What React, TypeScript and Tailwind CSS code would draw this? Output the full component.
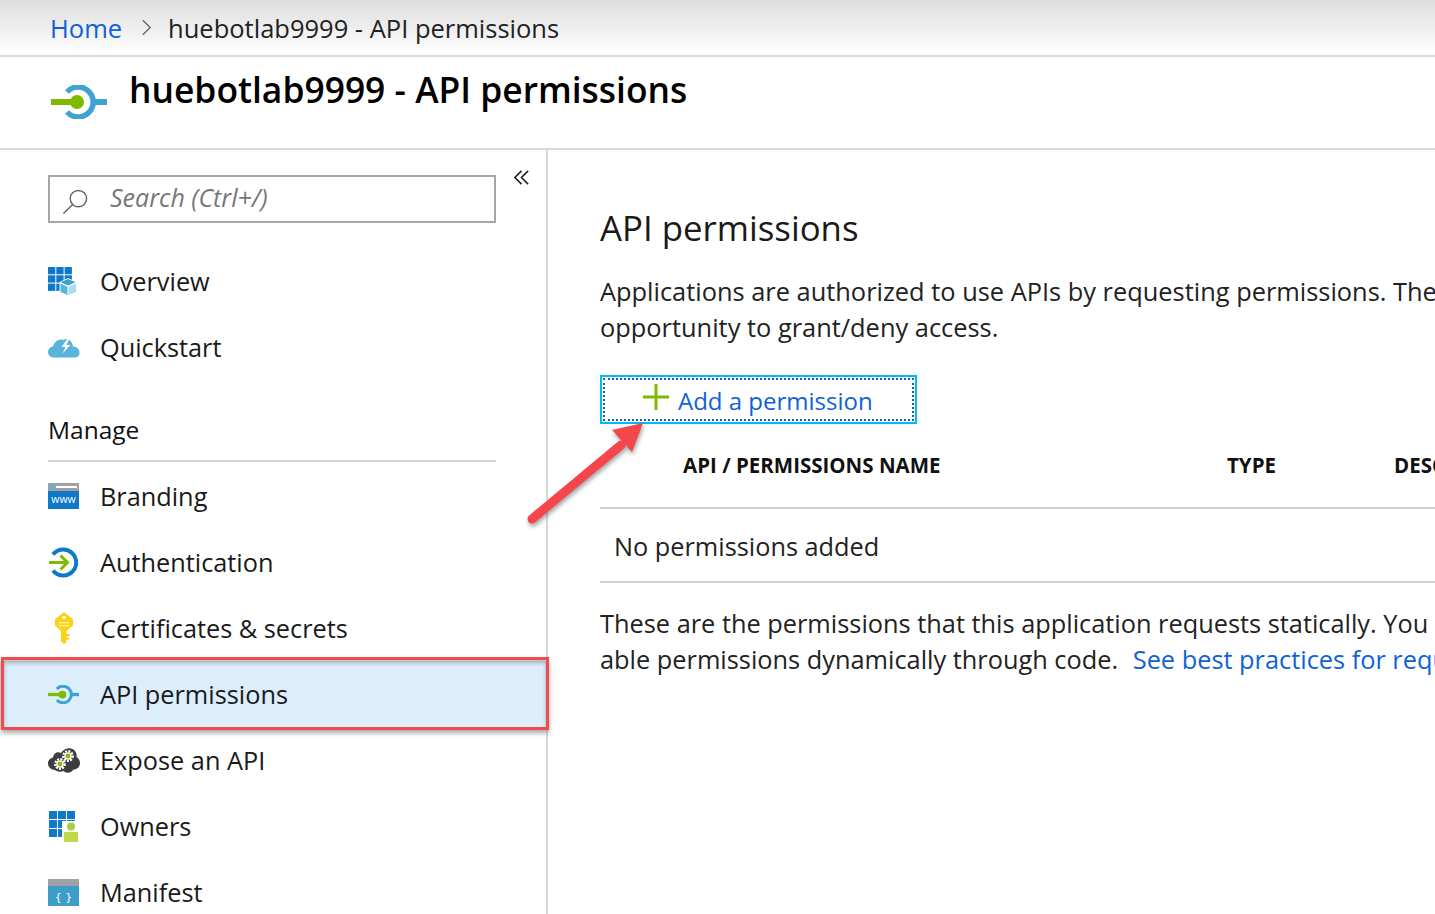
import React from "react";

const ApiIcon = ({ className }: { className: string }) => (
  <svg viewBox="0 0 56 34" className={className}>
    <path d="M16 7A15 15 0 1 1 16 27" fill="none" stroke="#3ea3d0" strokeWidth="5.500" />
    <rect x="41" y="14" width="15" height="6" fill="#3ea3d0" />
    <rect x="0" y="14" width="26" height="6" fill="#7fba00" />
    <circle cx="26" cy="17" r="7" fill="#7fba00" />
  </svg>
);

const Overview = () => (
  <svg viewBox="0 0 29 29" className="w-[29px] h-[29px]">
    {[0, 8.300, 16.600].flatMap((y) => [0, 8.300, 16.600].map((x) => <rect key={`${x}-${y}`} x={x} y={y} width="7.300" height="7.300" fill="#0f78c9" />))}
    <path d="M20 11l9 4v10l-9 4-8.500-4V15z" fill="#fff" />
    <path d="M20 12l7.500 3.200-7.500 3.300-7.500-3.300z" fill="#3d9fcf" />
    <path d="M12.500 16.500l7 3.300V28l-7-3z" fill="#59b4d9" />
    <path d="M28 16.500l-7.500 3.300V28l7.500-3z" fill="#a9dcf0" />
  </svg>
);

const Quickstart = () => (
  <svg viewBox="0 0 32 21" className="w-[32px] h-[21px]">
    <path d="M6 20.500a5.500 5.500 0 0 1-1-11C6.500 4.500 11 1.500 15.500 3 19 .5 24 3 25 9.500c4 0 6.500 3 6.500 6 0 3-2 5-5 5z" fill="#59b4d9" />
    <path d="M20 1l-6.500 9h4L14.500 16.500l8-8.500h-4l3-7z" fill="#fff" />
  </svg>
);

const Branding = () => (
  <svg viewBox="0 0 31 26" className="w-[31px] h-[26px]">
    <rect width="31" height="8" fill="#a0a1a2" />
    <rect y="8" width="31" height="18" fill="#0f78c9" />
    <circle cx="4" cy="4" r="2.500" fill="#59b4d9" />
    <rect x="8" y="3" width="21" height="2" fill="#fff" />
    <text x="15.500" y="20" textAnchor="middle" fill="#fff" fontSize="10.500" fontFamily="Open Sans, sans-serif">www</text>
  </svg>
);

const Auth = () => (
  <svg viewBox="0 0 29 31" className="w-[29px] h-[31px] ml-px">
    <path d="M4 7.500A13 13 0 1 1 4 23.500" fill="none" stroke="#0f78c9" strokeWidth="4" />
    <path d="M0 15.500h18M11.500 8.500l7 7-7 7" fill="none" stroke="#7fba00" strokeWidth="3" />
  </svg>
);

const Key = () => (
  <svg viewBox="0 0 20 32" className="w-[20px] h-[32px] ml-[6px]">
    <path d="M10 0l9 7.500v6L12.500 19v11L10 32l-3-2.500V19L1 13.500v-6z" fill="#fcd116" />
    <rect x="12" y="22" width="3.500" height="2.200" fill="#fcd116" />
    <rect x="12" y="25.500" width="3" height="2.200" fill="#fcd116" />
    <circle cx="10" cy="5.500" r="1.800" fill="#fff" />
    <rect x="5" y="10" width="10" height="1.300" fill="#fff2a8" />
    <rect x="5" y="13" width="10" height="1.300" fill="#fff2a8" />
  </svg>
);

const Gear = ({ x, y }: { x: number; y: number }) => (
  <g transform={`translate(${x} ${y})`}>
    <circle r="4.800" fill="none" stroke="#fff" strokeWidth="2.200" strokeDasharray="2 1.200" />
    <circle r="3.800" fill="#fff" />
    <circle r="2.400" fill="#8fb500" />
  </g>
);

const Expose = () => (
  <svg viewBox="0 0 32 27" className="w-[32px] h-[27px]">
    <path d="M7 23c-4 0-7-3-7-6.500S2.500 11 5 10.500C5.500 6 9.500 4 13 6c2-4 10-7.500 14-2 1.500 2 2 4 1.500 6 2 1 3.500 3.500 3.500 6 0 4-3 6.500-6.500 6.500-1.500 3-7 4.500-10 1.500C13 25 9 25 7 23z" fill="#3d3d3d" />
    <Gear x={20} y={9} />
    <Gear x={12} y={17} />
  </svg>
);

const Owners = () => (
  <svg viewBox="0 0 30 31" className="w-[30px] h-[31px] ml-px">
    {[0, 9, 18].flatMap((y) => [0, 9, 18].map((x) => <rect key={`${x}-${y}`} x={x} y={y} width="8" height="8" fill="#0f78c9" />))}
    <rect x="13" y="10" width="17" height="21" fill="#fff" />
    <rect x="15" y="21" width="14" height="10" fill="#bfd94a" />
    <circle cx="22" cy="15.500" r="4" fill="#a6cf3c" />
  </svg>
);

const Manifest = () => (
  <svg viewBox="0 0 31 27" className="w-[31px] h-[27px]">
    <rect width="31" height="27" fill="#3c9dc9" />
    <rect width="31" height="7" fill="#a0a1a2" />
    <text x="15.500" y="21.500" textAnchor="middle" fill="#fff" fontSize="11" fontFamily="DejaVu Sans, sans-serif">{"{ }"}</text>
  </svg>
);

const Row = ({ icon, label, active }: { icon: React.ReactNode; label: string; active?: boolean }) => (
  <div className={`h-[66px] flex items-center pl-[48px] text-[#1a1a1a] text-[25.300px] leading-none ${active ? "bg-[#dcedfc]" : ""}`}>
    <div className="w-[52px] shrink-0 flex">{icon}</div>
    <span className="pt-[2px]">{label}</span>
  </div>
);

export default function App() {
  return (
    <div className="relative w-[1435px] h-[914px] overflow-hidden bg-white text-black font-['Open_Sans','Noto_Sans',sans-serif]">
      <div className="h-[57px] border-b-2 border-[#d9d9d9] bg-gradient-to-b from-[#dedede] to-white flex items-center pl-[50px] text-[25.500px] leading-none">
        <span className="text-[#0f62d6] pt-[2px]">Home</span>
        <svg viewBox="0 0 12 20" className="w-[11px] h-[19px] ml-[19px] mr-[16px]"><path d="M2 2l8 8-8 8" fill="none" stroke="#666" strokeWidth="1.500" /></svg>
        <span className="text-[#222] pt-[2px]">huebotlab9999 - API permissions</span>
      </div>
      <div className="h-[93px] border-b-2 border-[#d9d9d9] flex items-start pl-[51px]">
        <ApiIcon className="w-[56px] h-[34px] mt-[28px] shrink-0" />
        <h1 className="ml-[22px] mt-[8px] text-[35.400px] leading-[48px] font-semibold">huebotlab9999 - API permissions</h1>
      </div>
      <div className="flex h-[764px]">
        <aside className="w-[548px] shrink-0 border-r-2 border-[#d9d9d9]">
          <div className="flex items-start pl-[48px] pt-[25px]">
            <div className="w-[448px] h-[48px] border-2 border-[#a6a6a6] flex items-center pl-[12px]">
              <svg viewBox="0 0 28 28" className="w-[27px] h-[27px] mt-[4px]"><circle cx="17" cy="11" r="8.500" fill="none" stroke="#666" strokeWidth="1.500" /><path d="M11 17L1.500 26.500" stroke="#666" strokeWidth="1.500" /></svg>
              <span className="ml-[21px] mt-[-4px] italic text-[25px] leading-none text-[#777]">Search (Ctrl+/)</span>
            </div>
            <svg viewBox="0 0 18 18" className="w-[17px] h-[17px] ml-[17px] mt-[-6px]"><path d="M9 2L2 9l7 7M16 2L9 9l7 7" fill="none" stroke="#222" strokeWidth="1.700" /></svg>
          </div>
          <div className="mt-[25px]">
            <Row icon={<Overview />} label="Overview" />
            <Row icon={<Quickstart />} label="Quickstart" />
          </div>
          <div className="ml-[48px] w-[448px] mt-[18px] h-[64px] border-b-2 border-[#d4d4d4] pt-[15px] text-[24.500px] leading-[34px] text-[#111]">Manage</div>
          <div className="mt-[1px]">
            <Row icon={<Branding />} label="Branding" />
            <Row icon={<Auth />} label="Authentication" />
            <Row icon={<Key />} label="Certificates & secrets" />
            <Row icon={<ApiIcon className="w-[31px] h-[19px]" />} label="API permissions" active />
            <Row icon={<Expose />} label="Expose an API" />
            <Row icon={<Owners />} label="Owners" />
            <Row icon={<Manifest />} label="Manifest" />
          </div>
        </aside>
        <main className="pl-[52px] min-w-0 flex-1 overflow-hidden">
          <h2 className="mt-[53px] text-[34.800px] leading-[50px] text-[#1a1a1a] whitespace-nowrap">API permissions</h2>
          <p className="mt-[20px] text-[25.400px] leading-[36px] text-[#222] whitespace-nowrap">Applications are authorized to use APIs by requesting permissions. These permissions show up during consent where<br />opportunity to grant/deny access.</p>
          <div className="mt-[30px] w-[317px] h-[49px] border-2 border-[#00bcf2] p-px">
            <div className="w-full h-full border-2 border-dotted border-[#0f62d6] flex items-center pl-[38px] text-[#0f62d6] text-[24px] leading-none">
              <svg viewBox="0 0 26 26" className="w-[26px] h-[26px] mt-[-6px]"><path d="M13 0v26M0 13h26" stroke="#7fba00" strokeWidth="3" /></svg>
              <span className="ml-[9px] pt-[2px]">Add a permission</span>
            </div>
          </div>
          <div className="h-[85px] border-b-2 border-[#cfcfcf] flex items-start pt-[27px] pl-[83px] text-[20.500px] leading-[28px] font-bold text-[#111] whitespace-nowrap">
            <span className="w-[544px] shrink-0">API / PERMISSIONS NAME</span>
            <span className="w-[167px] shrink-0">TYPE</span>
            <span>DESCRIPTION</span>
          </div>
          <div className="h-[74px] border-b-2 border-[#cfcfcf] flex items-center pl-[14px] pt-[4px] text-[25.300px] leading-none text-[#222]">No permissions added</div>
          <p className="mt-[22px] text-[25.350px] leading-[36px] text-[#222] whitespace-nowrap">These are the permissions that this application requests statically. You may also request these<br />able permissions dynamically through code. <span className="text-[#0f62d6] ml-[8px]">See best practices for requesting permissions</span></p>
        </main>
      </div>
      <div className="absolute left-[1px] top-[657px] w-[548px] h-[73px] border-[3px] border-[#f04b4f] shadow-[0_3px_5px_rgba(0,0,0,0.35),inset_0_3px_4px_rgba(0,0,0,0.25)] pointer-events-none" />
      <svg className="absolute left-[520px] top-[415px] w-[135px] h-[120px] pointer-events-none" viewBox="0 0 135 120">
        <g style={{ filter: "drop-shadow(1px 3px 2px rgba(0,0,0,0.35))" }}>
          <path d="M12 104L101 30" stroke="#f5474b" strokeWidth="9" strokeLinecap="round" />
          <path d="M123 8L92 15 112 37z" fill="#f5474b" />
        </g>
      </svg>
    </div>
  );
}
